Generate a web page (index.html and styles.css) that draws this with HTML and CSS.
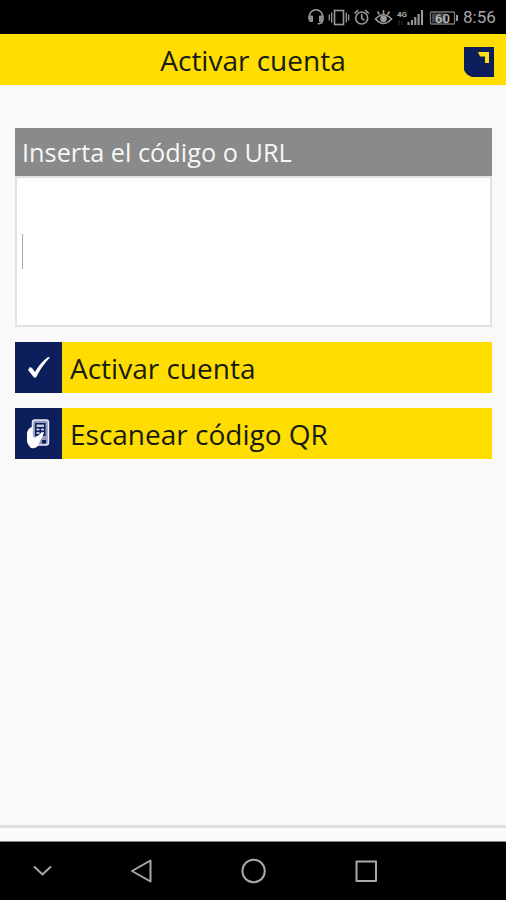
FILE: index.html
```html
<!DOCTYPE html>
<html lang="es">
<head>
<meta charset="utf-8">
<title>Activar cuenta</title>
<link rel="stylesheet" href="styles.css">
</head>
<body>
<div class="screen">
  <div class="status">
    <svg class="status-icons" width="160" height="34" viewBox="300 0 160 34" fill="none" stroke="#999" stroke-width="1.6">
      <path d="M309.3 19v-2.500a6.700 6.700 0 0 1 13.400 0v3.500q0 3.800-5 3.800"/>
      <path d="M309 16h3.500v5.500h-2q-1.500 0-1.500-2zM323 16h-3.500v5.500h2q1.500 0 1.500-2z" fill="#888" stroke-width="1"/>
      <rect x="334.500" y="10.500" width="9" height="14"/>
      <path d="M331.700 12.500v10M346.300 12.500v10M329.300 14.500v6M348.700 14.500v6" stroke-width="1.300"/>
      <circle cx="361.700" cy="18" r="6"/>
      <path d="M361.700 14v4.300l2.600 2M354.600 13.300l3.600-3.300M368.800 13.300l-3.600-3.300"/>
      <path d="M375.500 19q8-8.500 16 0-8 9-16 0z"/>
      <circle cx="383.500" cy="18.800" r="2.600" fill="#999"/>
      <path d="M383.500 10v4M377.500 11.500l2 3.200M389.500 11.500l-2 3.200"/>
      <path d="M408.500 22v3M412 20v5M415.300 17v8M418.600 14v11M422 10v15" stroke-width="2.100"/>
      <path d="M399 20v5M402 21v4" stroke="#222"/>
      <rect x="430.500" y="12" width="24" height="12" rx="1" stroke="#777" stroke-width="1.300"/>
      <rect x="432" y="13.500" width="14" height="9" fill="#444" stroke="none"/>
      <path d="M457 15v6" stroke-width="2"/>
      <text class="net" x="397" y="16.500">4G</text>
      <text class="charge" x="435" y="22.500">60</text>
    </svg>
    <span class="clock">8:56</span>
  </div>
  <header class="header">
    <h1 class="title">Activar cuenta</h1>
    <svg class="logo" width="32" height="32" viewBox="0 0 32 32"><path d="M1 1h30v30H9Q3 29 1 24z" fill="#0c1f5c"/><path d="M15 6h11v11h-4v-6.500h-5z" fill="#ffdf12"/></svg>
  </header>
  <main class="content">
    <label class="label" for="code"><span class="label-text">Inserta el código o URL</span></label>
    <div class="field" id="code"><span class="caret"></span></div>
    <div class="button">
      <span class="tile"><svg width="47" height="51" viewBox="0 0 47 51"><path d="M13 28l2-3 2 1 3 4q5-9 13-15l2 .5q-8 8-14 20h-2z" fill="#fff"/></svg></span>
      <span class="button-text">Activar cuenta</span>
    </div>
    <div class="button">
      <span class="tile"><svg width="47" height="51" viewBox="0 0 47 51">
        <rect x="17.500" y="12" width="16" height="25" rx="2.500" fill="#8f9abc" stroke="#e8ebf4" stroke-width="1.500"/>
        <path d="M20 15h10.500v13H20z" fill="#0c1f5c"/>
        <path d="M21.500 16.500h7.500v2.500h-7.500zM21.500 20.500h3v2h-3zM26 20.500h3v2h-3zM21.500 24h3v2h-3zM26 24h3v2h-3z" fill="#c3cadd"/>
        <path d="M12 25q1-5 5-6v9l3 2 6-5q3-1 2 3l-3 5-2 5q-3 3-7 2-4-4-4-7z" fill="#fff"/>
        <path d="M27 32h4v3.500h-4z" fill="#0c1f5c"/>
      </svg></span>
      <span class="button-text">Escanear código QR</span>
    </div>
  </main>
  <footer class="footer"></footer>
  <nav class="nav">
    <svg width="506" height="58" viewBox="0 0 506 58" fill="none" stroke="#aaa" stroke-width="2">
      <path d="M34 24.500l8.500 8 8.500-8"/>
      <path d="M150.500 18.500v21l-18.500-10.500z" stroke-linejoin="round"/>
      <circle cx="253.600" cy="29" r="11.200"/>
      <rect x="356.500" y="19.500" width="19.500" height="19.500" stroke-linejoin="round"/>
    </svg>
  </nav>
</div>
</body>
</html>
```
FILE: styles.css
```css
* { box-sizing: border-box; }
body { margin: 0; }
.screen {
  width: 506px;
  height: 900px;
  display: flex;
  flex-direction: column;
  background: #f9f9f9;
  font-family: "Open Sans", sans-serif;
  color: #171b10;
}
.status {
  height: 34px;
  display: flex;
  justify-content: flex-end;
  align-items: center;
  gap: 3px;
  padding-right: 11px;
  background: #000;
}
.status-icons { flex: none; }
.net { font: 700 8px Roboto, sans-serif; fill: #aaa; stroke: none; }
.charge { font: 500 13px Roboto, sans-serif; fill: #bbb; stroke: none; }
.clock { width: 32px; font: 17px/36px Roboto, sans-serif; color: #a6a6a6; white-space: nowrap; }
.header {
  height: 51px;
  display: grid;
  grid-template-columns: 43px 1fr 43px;
  align-items: center;
  background: #ffdd00;
}
.title {
  grid-column: 2;
  margin: 0;
  padding-top: 1px;
  text-align: center;
  font-size: 28px;
  line-height: 50px;
  font-weight: 400;
}
.logo { margin-top: 5px; }
.content { flex: 1; padding: 43px 14px 0 15px; }
.label {
  height: 48px;
  display: block;
  padding-left: 7px;
  background: #8a8a8a;
  color: #f7f7f7;
  font-size: 25.3px;
  line-height: 48px;
}
.field {
  height: 151px;
  display: flex;
  align-items: center;
  margin-bottom: 15px;
  padding-left: 5px;
  border: 2px solid #e2e2e2;
  background: #fff;
}
.caret { width: 1px; height: 35px; background: #aaa; }
.button {
  height: 51px;
  display: flex;
  margin-bottom: 15px;
  background: #ffdd00;
  font-size: 28px;
  line-height: 53px;
}
.tile { width: 47px; height: 51px; margin-right: 8px; background: #0c1f5c; }
.tile svg { display: block; }
.footer { height: 17px; border-top: 3px solid #dedede; border-bottom: 1px solid #888; background: #fafafa; }
.nav { height: 58px; background: #000; }
.nav svg { display: block; }
```
